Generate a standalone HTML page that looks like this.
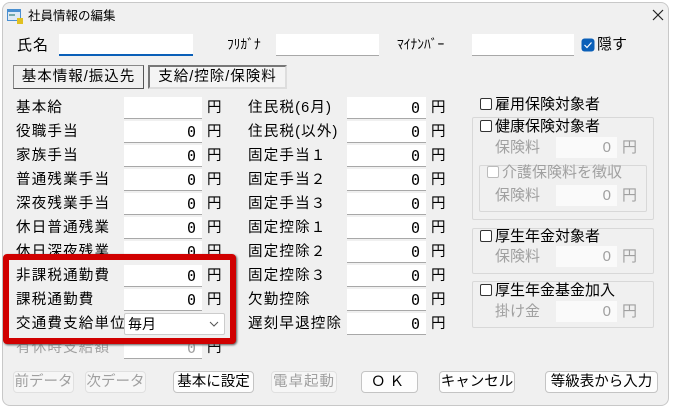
<!DOCTYPE html>
<html><head><meta charset="utf-8"><style>
*{box-sizing:border-box;margin:0;padding:0}
body{width:679px;height:413px;background:#fff;position:relative;overflow:hidden;font-family:"Liberation Sans","Noto Sans CJK JP",sans-serif;color:#000}
.win{position:absolute;left:2px;top:2px;width:667px;height:404px;background:#f0f0f0;border:1px solid #c8c8c8;border-radius:8px}
.a{position:absolute;white-space:nowrap}
.l{font-size:14.5px;letter-spacing:1.2px;line-height:22px}
.in{position:absolute;background:#fff;border-bottom:1px solid #a8a8a8;height:22px;font-size:15px;text-align:right;padding-right:6px;line-height:22px;font-family:"DejaVu Sans Mono","Liberation Mono",monospace}
.dis{color:#a0a0a0}
.din{position:absolute;background:#fafafa;height:21px;font-size:15px;text-align:right;padding-right:6px;line-height:21px;color:#a0a0a0}
.grp{position:absolute;border:1px solid #d8d8d8;border-radius:2px}
.cb{display:inline-block;width:12px;height:12px;border:1px solid #333;border-radius:2px;vertical-align:-1px;margin-right:3px;background:#fff}
.btn{position:absolute;height:22px;border:1px solid #c4c4c4;border-radius:4px;background:#fdfdfd;font-size:14.5px;text-align:center;line-height:20px}
</style></head><body>
<div class="win"></div>
<svg class="a" style="left:7px;top:8px" width="16" height="16"><rect x="0" y="1" width="14" height="12" fill="#4a8fd0"/><rect x="1" y="4" width="12" height="8" fill="#dfe9f5"/><rect x="2" y="6" width="6" height="2" fill="#7aa"/><rect x="10" y="10" width="6" height="6" fill="#e0c020"/></svg>
<div class="a" style="left:28px;top:7px;font-size:12.5px;line-height:18px">社員情報の編集</div>
<svg class="a" style="left:652px;top:9px" width="12" height="12"><path d="M1 1L11 11M11 1L1 11" stroke="#222" stroke-width="1.2"/></svg>

<div class="a" style="left:17px;top:35px;font-size:15px;line-height:22px;letter-spacing:1px">氏名</div>
<div class="in" style="left:59px;top:34px;width:134px;border-bottom:2px solid #0a5fb8"></div>
<div class="a" style="left:227px;top:35px;font-size:13.5px;line-height:20px">ﾌﾘｶﾞﾅ</div>
<div class="in" style="left:276px;top:34px;width:103px"></div>
<div class="a" style="left:397px;top:35px;font-size:13.5px;line-height:20px">ﾏｲﾅﾝﾊﾞｰ</div>
<div class="in" style="left:472px;top:34px;width:102px"></div>
<svg class="a" style="left:581px;top:38px" width="14" height="14"><rect x="0.5" y="0.5" width="13" height="13" rx="3" fill="#0a5fb8"/><path d="M3.5 7l2.5 2.5 4.5-5" stroke="#fff" stroke-width="1.2" fill="none"/></svg>
<div class="a" style="left:597px;top:34px;font-size:15px;line-height:22px">隠す</div>

<div class="a" style="left:13px;top:65px;width:131px;height:24px;border:1px solid #888;border-right-color:#555;border-bottom-color:#555;background:#f0f0f0;font-size:14.5px;line-height:22px;text-align:center;letter-spacing:1px">基本情報/振込先</div>
<div class="a" style="left:148px;top:65px;width:139px;height:24px;border:2px solid #777;border-right-color:#ddd;border-bottom-color:#ddd;background:#f4f4f4;font-size:14.5px;line-height:21px;text-align:center;letter-spacing:1px">支給/控除/保険料</div>

<div class="a l" style="left:16px;top:97px">基本給</div>
<div class="in" style="left:124px;top:97px;width:78px"></div>
<div class="a l" style="left:207px;top:97px">円</div>
<div class="a l" style="left:16px;top:121px">役職手当</div>
<div class="in" style="left:124px;top:121px;width:78px">0</div><div class="a l" style="left:207px;top:121px">円</div>
<div class="a l" style="left:16px;top:145px">家族手当</div>
<div class="in" style="left:124px;top:145px;width:78px">0</div><div class="a l" style="left:207px;top:145px">円</div>
<div class="a l" style="left:16px;top:169px">普通残業手当</div>
<div class="in" style="left:124px;top:169px;width:78px">0</div><div class="a l" style="left:207px;top:169px">円</div>
<div class="a l" style="left:16px;top:193px">深夜残業手当</div>
<div class="in" style="left:124px;top:193px;width:78px">0</div><div class="a l" style="left:207px;top:193px">円</div>
<div class="a l" style="left:16px;top:217px">休日普通残業</div>
<div class="in" style="left:124px;top:217px;width:78px">0</div><div class="a l" style="left:207px;top:217px">円</div>
<div class="a l" style="left:16px;top:241px">休日深夜残業</div>
<div class="in" style="left:124px;top:241px;width:78px">0</div><div class="a l" style="left:207px;top:241px">円</div>
<div class="a l dis" style="left:16px;top:337px">有休時支給額</div>
<div class="in dis" style="left:124px;top:337px;width:78px">0</div><div class="a l" style="left:207px;top:337px">円</div>

<div class="a" style="left:3px;top:254px;width:233px;height:90px;border:6px solid #d00000;border-radius:4px;background:#f0f0f0;box-shadow:1px 1px 2px #555"></div>
<div class="a l" style="left:16px;top:265px">非課税通勤費</div>
<div class="in" style="left:124px;top:265px;width:78px">0</div><div class="a l" style="left:207px;top:265px">円</div>
<div class="a l" style="left:16px;top:289px">課税通勤費</div>
<div class="in" style="left:124px;top:289px;width:78px">0</div><div class="a l" style="left:207px;top:289px">円</div>
<div class="a l" style="left:16px;top:313px">交通費支給単位</div>
<div class="a" style="left:124px;top:313px;width:101px;height:22px;background:#fff;border:1px solid #ccc;border-radius:2px;font-size:14px;line-height:20px;padding-left:3px">毎月</div>
<svg class="a" style="left:209px;top:321px" width="10" height="6"><path d="M1 1l4 4 4-4" stroke="#555" fill="none"/></svg>

<div class="a l" style="left:248px;top:97px">住民税(6月)</div>
<div class="in" style="left:347px;top:97px;width:79px">0</div><div class="a l" style="left:431px;top:97px">円</div>
<div class="a l" style="left:248px;top:121px">住民税(以外)</div>
<div class="in" style="left:347px;top:121px;width:79px">0</div><div class="a l" style="left:431px;top:121px">円</div>
<div class="a l" style="left:248px;top:145px">固定手当１</div>
<div class="in" style="left:347px;top:145px;width:79px">0</div><div class="a l" style="left:431px;top:145px">円</div>
<div class="a l" style="left:248px;top:169px">固定手当２</div>
<div class="in" style="left:347px;top:169px;width:79px">0</div><div class="a l" style="left:431px;top:169px">円</div>
<div class="a l" style="left:248px;top:193px">固定手当３</div>
<div class="in" style="left:347px;top:193px;width:79px">0</div><div class="a l" style="left:431px;top:193px">円</div>
<div class="a l" style="left:248px;top:217px">固定控除１</div>
<div class="in" style="left:347px;top:217px;width:79px">0</div><div class="a l" style="left:431px;top:217px">円</div>
<div class="a l" style="left:248px;top:241px">固定控除２</div>
<div class="in" style="left:347px;top:241px;width:79px">0</div><div class="a l" style="left:431px;top:241px">円</div>
<div class="a l" style="left:248px;top:265px">固定控除３</div>
<div class="in" style="left:347px;top:265px;width:79px">0</div><div class="a l" style="left:431px;top:265px">円</div>
<div class="a l" style="left:248px;top:289px">欠勤控除</div>
<div class="in" style="left:347px;top:289px;width:79px">0</div><div class="a l" style="left:431px;top:289px">円</div>
<div class="a l" style="left:248px;top:313px">遅刻早退控除</div>
<div class="in" style="left:347px;top:313px;width:79px">0</div><div class="a l" style="left:431px;top:313px">円</div>

<div class="a" style="left:480px;top:94px;font-size:15px;line-height:22px"><span class="cb"></span>雇用保険対象者</div>
<div class="grp" style="left:472px;top:117px;width:182px;height:103px"></div>
<div class="a" style="left:480px;top:116px;font-size:15px;line-height:22px"><span class="cb"></span>健康保険対象者</div>
<div class="a dis" style="left:495px;top:137px;font-size:15px;line-height:22px">保険料</div>
<div class="din" style="left:556px;top:137px;width:61px">0</div>
<div class="a dis" style="left:622px;top:137px;font-size:15px;line-height:22px">円</div>
<div class="grp" style="left:479px;top:165px;width:168px;height:47px"></div>
<div class="a dis" style="left:487px;top:162px;font-size:15px;line-height:22px"><span class="cb" style="border-color:#bbb"></span>介護保険料を徴収</div>
<div class="a dis" style="left:495px;top:185px;font-size:15px;line-height:22px">保険料</div>
<div class="din" style="left:556px;top:185px;width:61px">0</div>
<div class="a dis" style="left:622px;top:185px;font-size:15px;line-height:22px">円</div>

<div class="grp" style="left:472px;top:228px;width:182px;height:46px"></div>
<div class="a" style="left:480px;top:226px;font-size:15px;line-height:22px"><span class="cb"></span>厚生年金対象者</div>
<div class="a dis" style="left:495px;top:246px;font-size:15px;line-height:22px">保険料</div>
<div class="din" style="left:556px;top:246px;width:61px">0</div>
<div class="a dis" style="left:622px;top:246px;font-size:15px;line-height:22px">円</div>

<div class="grp" style="left:472px;top:281px;width:182px;height:47px"></div>
<div class="a" style="left:480px;top:280px;font-size:15px;line-height:22px"><span class="cb"></span>厚生年金基金加入</div>
<div class="a dis" style="left:495px;top:301px;font-size:15px;line-height:22px">掛け金</div>
<div class="din" style="left:556px;top:301px;width:61px">0</div>
<div class="a dis" style="left:622px;top:301px;font-size:15px;line-height:22px">円</div>

<div class="btn dis" style="left:13px;top:371px;width:61px;border-color:#e0e0e0;background:#f6f6f6">前データ</div>
<div class="btn dis" style="left:85px;top:371px;width:61px;border-color:#e0e0e0;background:#f6f6f6">次データ</div>
<div class="btn" style="left:173px;top:371px;width:81px">基本に設定</div>
<div class="btn dis" style="left:271px;top:371px;width:66px;border-color:#e0e0e0;background:#f6f6f6;letter-spacing:1px">電卓起動</div>
<div class="btn" style="left:361px;top:371px;width:57px;letter-spacing:4px">ＯＫ</div>
<div class="btn" style="left:439px;top:371px;width:76px">キャンセル</div>
<div class="btn" style="left:545px;top:371px;width:113px">等級表から入力</div>
</body></html>
